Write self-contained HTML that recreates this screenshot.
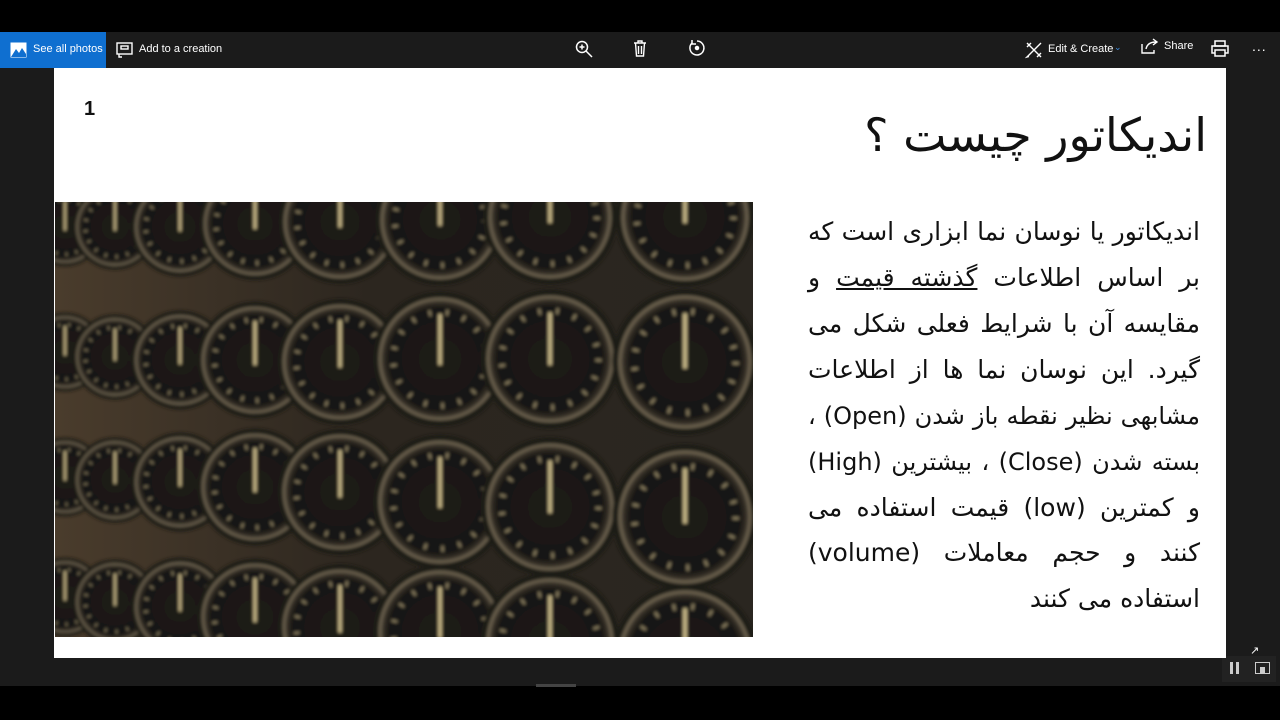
<!DOCTYPE html>
<html><head><meta charset="utf-8"><style>
*{margin:0;padding:0;box-sizing:border-box}
body{width:1280px;height:720px;background:#000;position:relative;overflow:hidden;font-family:"Liberation Sans","DejaVu Sans",sans-serif}
.tb{position:absolute;left:0;top:32px;width:1280px;height:36px;background:#1b1b1b;color:#fff;font-size:11px}
.see{position:absolute;left:0;top:0;width:106px;height:36px;background:#0f6fd0}
.t{position:absolute;top:11px;white-space:nowrap}
.dark{position:absolute;left:0;top:68px;width:1280px;height:619px;background:#1b1b1b}
.slide{position:absolute;left:54px;top:68px;width:1172px;height:590px;background:#fff}
.fa{font-family:"DejaVu Sans","Noto Sans CJK SC",sans-serif;color:#111;direction:rtl}
.ln{position:absolute;left:808px;width:392px;font-size:25px;height:40px;line-height:40px;text-align:justify;text-align-last:justify;white-space:nowrap}
</style></head><body>
<div class="tb">
 <div class="see"></div>
 <svg style="position:absolute;left:10px;top:10px" width="17" height="16"><rect x="0.5" y="0.5" width="16" height="15" fill="#fff"/><path d="M1 15 L6 7 L9 11 L12 6 L16 12 L16 15Z" fill="#0f6fd0"/></svg>
 <span class="t" style="left:33px">See all photos</span>
 <svg style="position:absolute;left:116px;top:10px" width="17" height="16" fill="none" stroke="#fff" stroke-width="1.4"><rect x="1" y="1" width="15" height="11"/><rect x="5" y="4" width="7" height="3"/><path d="M3 12v3h3"/></svg>
 <span class="t" style="left:139px">Add to a creation</span>
 <svg style="position:absolute;left:575px;top:8px" width="18" height="18" fill="none" stroke="#fff" stroke-width="1.5"><circle cx="7" cy="7" r="5.5"/><path d="M11 11l6 6M4.5 7h5M7 4.5v5"/></svg>
 <svg style="position:absolute;left:633px;top:8px" width="14" height="17" fill="none" stroke="#fff" stroke-width="1.4"><path d="M1 3h12M5 3V1h4v2M2.5 3l1 13h7l1-13M5.5 6v8M8.5 6v8"/></svg>
 <svg style="position:absolute;left:688px;top:7px" width="18" height="18" fill="none" stroke="#fff" stroke-width="1.5"><path d="M4 4a7 7 0 1 0 5-2"/><path d="M4 1v4h4"/><circle cx="9" cy="9" r="1.5" fill="#fff"/></svg>
 <svg style="position:absolute;left:1025px;top:9px" width="18" height="18" fill="none" stroke="#fff" stroke-width="1.4"><path d="M2 2l14 14M16 2L4 14l-2 2 2-0.5M2 6l4-4M12 16l4-4"/></svg>
 <span class="t" style="left:1048px">Edit &amp; Create</span>
 <span class="t" style="left:1114px;top:10px;color:#3c8de0;font-size:9px">&#8964;</span>
 <svg style="position:absolute;left:1141px;top:6px" width="18" height="16" fill="none" stroke="#fff" stroke-width="1.4"><path d="M1 6v9h12v-3"/><path d="M5 11c1-5 5-7 10-7M12 1l4 3-4 3"/></svg>
 <span class="t" style="left:1164px;top:8px">Share</span>
 <svg style="position:absolute;left:1211px;top:8px" width="18" height="17" fill="none" stroke="#fff" stroke-width="1.5"><rect x="4" y="1" width="10" height="5"/><rect x="1" y="6" width="16" height="7"/><rect x="4" y="10" width="10" height="6" fill="#1b1b1b"/></svg>
 <span class="t" style="left:1252px;top:6px;font-size:14px;letter-spacing:1px">...</span>
</div>
<div class="dark"></div>
<div style="position:absolute;left:0;top:686px;width:1280px;height:34px;background:#000"></div>
<div style="position:absolute;left:536px;top:684px;width:40px;height:3px;background:#444"></div>
<div style="position:absolute;left:1222px;top:656px;width:54px;height:26px;background:#222"></div>
<div style="position:absolute;left:1230px;top:662px;width:3px;height:12px;background:#ccc"></div>
<div style="position:absolute;left:1236px;top:662px;width:3px;height:12px;background:#ccc"></div>
<div style="position:absolute;left:1255px;top:662px;width:15px;height:12px;border:1px solid #ccc"></div>
<div style="position:absolute;left:1260px;top:667px;width:5px;height:6px;background:#ccc"></div>
<span style="position:absolute;left:1250px;top:644px;color:#fff;font-size:11px">&#8599;</span>
<div class="slide">
 <div style="position:absolute;left:30px;top:30px;font-size:20px;font-weight:bold;color:#111">1</div>
 <svg style="position:absolute;left:1px;top:134px" width="698" height="435" viewBox="0 0 698 435">
  <defs>
   <filter id="bl" x="-5%" y="-5%" width="110%" height="110%"><feGaussianBlur stdDeviation="1.6"/></filter>
   <linearGradient id="bg" x1="0" x2="1"><stop offset="0" stop-color="#4a3c2c"/><stop offset="0.45" stop-color="#2c261f"/><stop offset="1" stop-color="#2a2620"/></linearGradient>
   <radialGradient id="face"><stop offset="0" stop-color="#1e1c18"/><stop offset="0.85" stop-color="#181612"/><stop offset="1" stop-color="#4a4236"/></radialGradient>
   <g id="g"><circle r="1.12" fill="#1e1a15"/><circle r="1" fill="url(#face)" stroke="#6a604e" stroke-width="0.05"/><circle r="0.78" fill="none" stroke="#a89a74" stroke-width="0.1" stroke-dasharray="0.04 0.25" opacity="0.8"/><path d="M0 0.1L0 -0.75" stroke="#c8b888" stroke-width="0.06"/></g>
  </defs>
  <rect width="698" height="435" fill="url(#bg)"/>
  <g filter="url(#bl)">
   <use href="#g" transform="translate(10,25) scale(35)"/><use href="#g" transform="translate(60,25) scale(38)"/><use href="#g" transform="translate(125,25) scale(44)"/><use href="#g" transform="translate(200,22) scale(50)"/><use href="#g" transform="translate(285,20) scale(55)"/><use href="#g" transform="translate(385,18) scale(58)"/><use href="#g" transform="translate(495,15) scale(60)"/><use href="#g" transform="translate(630,15) scale(62)"/>
   <use href="#g" transform="translate(10,150) scale(35)"/><use href="#g" transform="translate(60,155) scale(38)"/><use href="#g" transform="translate(125,158) scale(44)"/><use href="#g" transform="translate(200,158) scale(52)"/><use href="#g" transform="translate(285,160) scale(56)"/><use href="#g" transform="translate(385,157) scale(60)"/><use href="#g" transform="translate(495,157) scale(62)"/><use href="#g" transform="translate(630,160) scale(65)"/>
   <use href="#g" transform="translate(10,275) scale(35)"/><use href="#g" transform="translate(60,278) scale(38)"/><use href="#g" transform="translate(125,280) scale(44)"/><use href="#g" transform="translate(200,285) scale(52)"/><use href="#g" transform="translate(285,290) scale(56)"/><use href="#g" transform="translate(385,300) scale(60)"/><use href="#g" transform="translate(495,305) scale(62)"/><use href="#g" transform="translate(630,315) scale(65)"/>
   <use href="#g" transform="translate(10,395) scale(35)"/><use href="#g" transform="translate(60,400) scale(38)"/><use href="#g" transform="translate(125,405) scale(44)"/><use href="#g" transform="translate(200,415) scale(52)"/><use href="#g" transform="translate(285,425) scale(56)"/><use href="#g" transform="translate(385,430) scale(60)"/><use href="#g" transform="translate(495,440) scale(62)"/><use href="#g" transform="translate(630,455) scale(65)"/>
  </g>
 </svg>
</div>
<div class="fa" style="position:absolute;left:820px;top:104px;width:387px;text-align:right;font-size:46px;line-height:62px">اندیکاتور چیست ؟</div>
<div class="fa ln" style="top:212px">اندیکاتور یا نوسان نما ابزاری است که</div>
<div class="fa ln" style="top:258px">بر اساس اطلاعات <u>گذشته قیمت</u> و</div>
<div class="fa ln" style="top:304px">مقایسه آن با شرایط فعلی شکل می</div>
<div class="fa ln" style="top:350px">گیرد. این نوسان نما ها از اطلاعات</div>
<div class="fa ln" style="top:396px;font-size:24px">مشابهی نظیر نقطه باز شدن (Open) ،</div>
<div class="fa ln" style="top:442px;font-size:24px">بسته شدن (Close) ، بیشترین (High)</div>
<div class="fa ln" style="top:488px">و کمترین (low) قیمت استفاده می</div>
<div class="fa ln" style="top:533px">کنند  و حجم معاملات (volume)</div>
<div class="fa ln" style="top:579px;text-align:right;text-align-last:right">استفاده می کنند</div>
</body></html>
